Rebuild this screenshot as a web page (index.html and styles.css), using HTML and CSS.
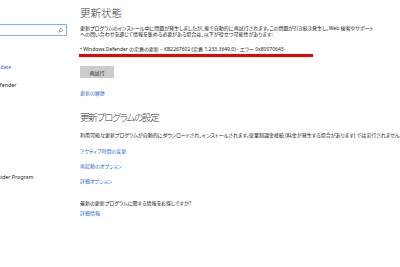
FILE: index.html
```html
<!DOCTYPE html>
<html lang="ja">
<head>
<meta charset="utf-8">
<link rel="stylesheet" href="styles.css">
</head>
<body>
<div class="page">
  <aside class="sidebar">
    <div class="search">
      <svg class="search-icon" width="5" height="5" viewBox="0 0 10 10"><circle cx="6" cy="4" r="3" fill="none" stroke="#777" stroke-width="1.2"/><line x1="3.8" y1="6.2" x2="1" y2="9" stroke="#777" stroke-width="1.4"/></svg>
    </div>
    <div class="nav-item nav-active nav-first">Windows Update</div>
    <div class="nav-item nav-second">Windows Defender</div>
    <div class="nav-item nav-third">Windows Insider Program</div>
  </aside>
  <main class="main">
    <h1 class="title">更新状態</h1>
    <p class="msg">更新プログラムのインストール中に問題が発生しましたが、後で自動的に再試行されます。この問題が引き続き発生し、Web 検索やサポート<br>への問い合わせを通じて情報を集める必要がある場合は、以下が役立つ可能性があります:</p>
    <p class="bullet">• Windows Defender の定義の更新 – KB2267602 (定義 1.233.3649.0) - エラー 0x80070643</p>
    <div class="redbar"></div>
    <button class="retry">再試行</button>
    <a class="link link-history">更新の履歴</a>
    <h2 class="title title-2">更新プログラムの設定</h2>
    <p class="msg msg-2">利用可能な更新プログラムが自動的にダウンロードされ、インストールされます。従量制課金接続 (料金が発生する場合があります) では実行されません。</p>
    <a class="link link-1">アクティブ時間の変更</a>
    <a class="link link-2">再起動のオプション</a>
    <a class="link link-3">詳細オプション</a>
    <p class="msg question">最新の更新プログラムに関する情報をお探しですか?</p>
    <a class="link link-more">詳細情報</a>
  </main>
</div>
</body>
</html>
```
FILE: styles.css
```css
html, body {
  margin: 0;
  padding: 0;
  background: #fff;
}
body {
  width: 400px;
  height: 267px;
  overflow: hidden;
  font-family: "Noto Sans", "Noto Sans CJK JP", sans-serif;
  font-feature-settings: "palt";
  color: #1a1a1a;
}
.page {
  display: flex;
  width: 400px;
  height: 267px;
}
.sidebar {
  width: 67px;
  flex: 0 0 67px;
  overflow: hidden;
  padding-top: 24px;
}
.search {
  height: 10px;
  margin-left: -10px;
  border: 1px solid #86acea;
  display: flex;
  justify-content: flex-end;
  align-items: center;
  padding-right: 3px;
}
.search-icon {
  display: block;
}
.nav-item {
  font-size: 5.3px;
  line-height: 6px;
  white-space: nowrap;
  margin-left: -31px;
  color: #222;
}
.nav-active { color: #2d6fcf; }
.nav-first { margin-top: 27.7px; }
.nav-second { margin-top: 12.3px; }
.nav-third { margin-top: 85.7px; }
.main {
  flex: 1;
  min-width: 0;
  overflow: hidden;
  padding-left: 13px;
}
.title {
  margin: 7px 0 0 0;
  font-size: 10.5px;
  line-height: 12px;
  font-weight: 300;
  color: #3a3a3a;
  white-space: nowrap;
}
.msg {
  margin: 6.3px 0 0 0;
  font-size: 5px;
  line-height: 6px;
  white-space: nowrap;
  color: #1a1a1a;
}
.bullet {
  margin: 8.7px 0 0 0;
  font-size: 5px;
  line-height: 6px;
  white-space: nowrap;
}
.redbar {
  margin: 2px 0 0 -1px;
  width: 234px;
  height: 3px;
  background: #f00000;
}
.retry {
  display: flex;
  align-items: center;
  justify-content: center;
  margin: 9.5px 0 0 0;
  width: 34px;
  height: 11.5px;
  padding: 0;
  border: none;
  background: #cccccc;
  font-family: inherit;
  font-size: 5px;
  color: #222;
}
.link {
  display: block;
  font-size: 5px;
  line-height: 6px;
  color: #2d6fcf;
  white-space: nowrap;
}
.link-history { margin-top: 12px; }
.title-2 {
  margin-top: 16.5px;
  font-size: 9.5px;
  letter-spacing: -1.2px;
}
.msg-2 { margin-top: 7.5px; }
.link-1 { margin-top: 9.7px; }
.link-2 { margin-top: 9px; }
.link-3 { margin-top: 9.3px; }
.question { margin-top: 16.3px; }
.link-more { margin-top: 4px; }
```
